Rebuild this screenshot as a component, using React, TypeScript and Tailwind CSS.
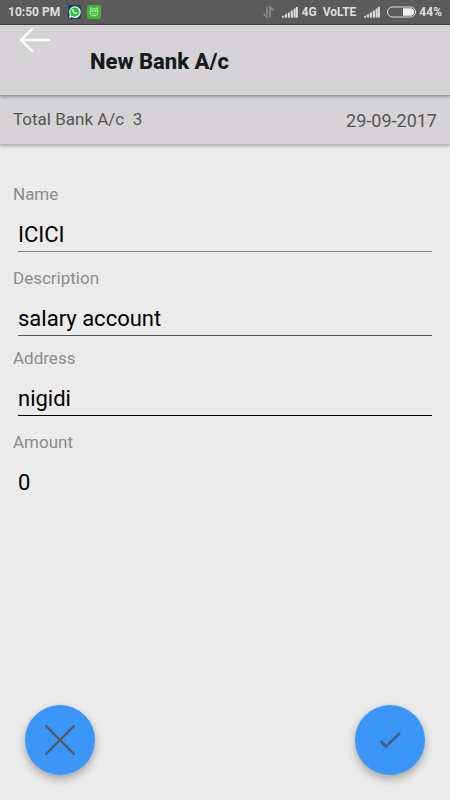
import { useState } from "react";
import clsx from "clsx";

const FIELDS = [
  { id: "name", label: "Name", value: "ICICI", gap: "", line: "border-[#808080]" },
  { id: "description", label: "Description", value: "salary account", gap: "mt-4", line: "border-[#555555]" },
  { id: "address", label: "Address", value: "nigidi", gap: "mt-3", line: "border-black" },
  { id: "amount", label: "Amount", value: "0", gap: "mt-4", line: "border-transparent" },
];

function SignalIcon() {
  return (
    <svg width="16" height="12" viewBox="0 0 16 12" fill="#dedede" aria-hidden="true">
      <path d="M0 11.5V10l2-1v2.5zM3 11.5V8.5L5 7.3v4.2zM6 11.5V6.6l2-1.2v6.1zM9 11.5V4.6l2-1.2v8.1zM12 11.5V2.6L15.5.4v11.1z" opacity="0.5" />
      <path d="M0 11.5v-1.2h2v1.2zM2.800 8.800h2v2.7h-2zM5.800 7h2v4.5h-2zM8.800 5h2v6.5h-2zM11.600 3h1.800v8.5h-1.800zM14 1h1.800v10.5H14z" />
    </svg>
  );
}

function StatusBar() {
  return (
    <div className="flex h-[25px] items-center border-b border-[#444444] bg-[#5b5b5b] px-2 text-[12px] font-bold text-[#dedede]">
      <span>10:50 PM</span>
      {/* WhatsApp */}
      <svg className="ml-2" width="13" height="14" viewBox="0 0 13 14" aria-hidden="true">
        <rect width="13" height="14" rx="2" fill="#1f3d6b" />
        <path d="M1 13l.8-3.2A5.8 5.8 0 1 1 4 12.1z" fill="#f4fff4" />
        <path d="M2.4 11.6l.5-2A4.6 4.6 0 1 1 4.3 11z" fill="#27c43f" />
        <path d="M4.6 4.2c-.9.7-.5 2 .5 3.2 1.1 1.2 2.6 2 3.6 1.3.5-.4.5-.8.3-1l-1.2-.6-.7.7c-.8-.3-1.5-1-1.8-1.8l.5-.6-.5-1.2c-.2-.2-.5-.2-.7 0z" fill="#fff" />
      </svg>
      {/* Green cat notification */}
      <svg className="ml-1.5" width="14" height="14" viewBox="0 0 14 14" fill="none" aria-hidden="true">
        <rect width="14" height="14" rx="2" fill="#43b535" />
        <path d="M3.8 2.6l1.4 1.3h3.6l1.4-1.3.2 2.7c1 2.7.2 5.5-3.4 5.500s-4.400-2.800-3.400-5.500z" stroke="#c5eebd" strokeWidth="1" />
        <path d="M3.700 6h6.600M5.500 8.400c.9.700 2.100.7 3 0M5.400 5.300v1.400M8.600 5.300v1.400" stroke="#c5eebd" strokeWidth="0.8" />
      </svg>

      <div className="ml-auto flex items-center">
        {/* Data transfer arrows */}
        <svg width="11" height="12" viewBox="0 0 11 12" fill="none" stroke="#8b8b8b" strokeWidth="1.6" aria-hidden="true">
          <path d="M4 .5v10.500L.7 7.6M7 11.5V1l3.300 3.400" />
        </svg>
        <span className="ml-2">
          <SignalIcon />
        </span>
        <span className="ml-1">4G</span>
        <span className="ml-1.5">VoLTE</span>
        <span className="ml-2">
          <SignalIcon />
        </span>
        <svg className="ml-1.5" width="31" height="12" viewBox="0 0 31 12" aria-hidden="true">
          <rect x="1.5" y="1" width="28" height="10" rx="5" fill="none" stroke="#dedede" strokeWidth="1" />
          <path d="M17 2.300h7.500a3.700 3.700 0 0 1 0 7.400H17z" fill="#efefef" />
        </svg>
        <span className="ml-0.5">44%</span>
      </div>
    </div>
  );
}

function Field({ field }: { field: (typeof FIELDS)[number] }) {
  const [value, setValue] = useState(field.value);

  return (
    <div className={field.gap}>
      <label htmlFor={field.id} className="block text-[17px] leading-5 text-[#8c8c8c]">
        {field.label}
      </label>
      <div className="mt-3 px-[5px]">
        <input
          id={field.id}
          type="text"
          value={value}
          onChange={(e) => setValue(e.target.value)}
          className={clsx("block h-9 w-full border-b bg-transparent pt-0.5 text-[22px] text-black outline-none", field.line)}
        />
      </div>
    </div>
  );
}

export default function App() {
  return (
    <div className="flex min-h-screen flex-col bg-[#ebebeb] font-['Roboto',sans-serif]">
      <StatusBar />

      <header className="relative z-20 flex h-[71px] items-start border-b border-[#a0a0a0] bg-[#d5d3d6] shadow-[0_1px_3px_rgba(0,0,0,0.3)]">
        <button type="button" aria-label="Back" className="ml-5">
          <svg width="30" height="30" viewBox="0 0 30 30" fill="none" stroke="#ffffff" strokeWidth="2.4" strokeLinecap="round" strokeLinejoin="round" aria-hidden="true">
            <path d="M29 15H1.200M12 4L1.200 15 12 26" />
          </svg>
        </button>
        <h1 className="ml-10 self-center pt-0.5 text-[22px] font-extrabold text-[#151b1d]">New Bank A/c</h1>
      </header>

      <section className="relative z-10 flex h-[49px] items-center justify-between border-b border-[#b8b8b8] bg-[#d5d3d6] px-[13px] text-[#555555] shadow-[0_1px_3px_rgba(0,0,0,0.3)]">
        <span className="text-[17px] whitespace-pre">Total Bank A/c  3</span>
        <span className="text-[18px]">29-09-2017</span>
      </section>

      <form className="flex grow flex-col" onSubmit={(e) => e.preventDefault()}>
        <div className="px-[13px] pt-[39px]">
          {FIELDS.map((field) => (
            <Field key={field.id} field={field} />
          ))}
        </div>

        <div className="mt-auto flex justify-between px-[25px] pb-[25px]">
          <button type="button" aria-label="Cancel" className="flex size-[70px] items-center justify-center rounded-full bg-[#3b96f8] shadow-[0_4px_8px_rgba(0,0,0,0.3)]">
            <svg width="30" height="30" viewBox="0 0 30 30" fill="none" stroke="#555555" strokeWidth="2" strokeLinecap="round" aria-hidden="true">
              <path d="M1 1l28 28M29 1L1 29" />
            </svg>
          </button>
          <button type="submit" aria-label="Save" className="flex size-[70px] items-center justify-center rounded-full bg-[#3b96f8] shadow-[0_4px_8px_rgba(0,0,0,0.3)]">
            <svg width="22" height="18" viewBox="0 0 22 18" fill="none" stroke="#3d5f88" strokeWidth="2.5" aria-hidden="true">
              <path d="M1.500 10l5.500 5.500L21 2" />
            </svg>
          </button>
        </div>
      </form>
    </div>
  );
}
